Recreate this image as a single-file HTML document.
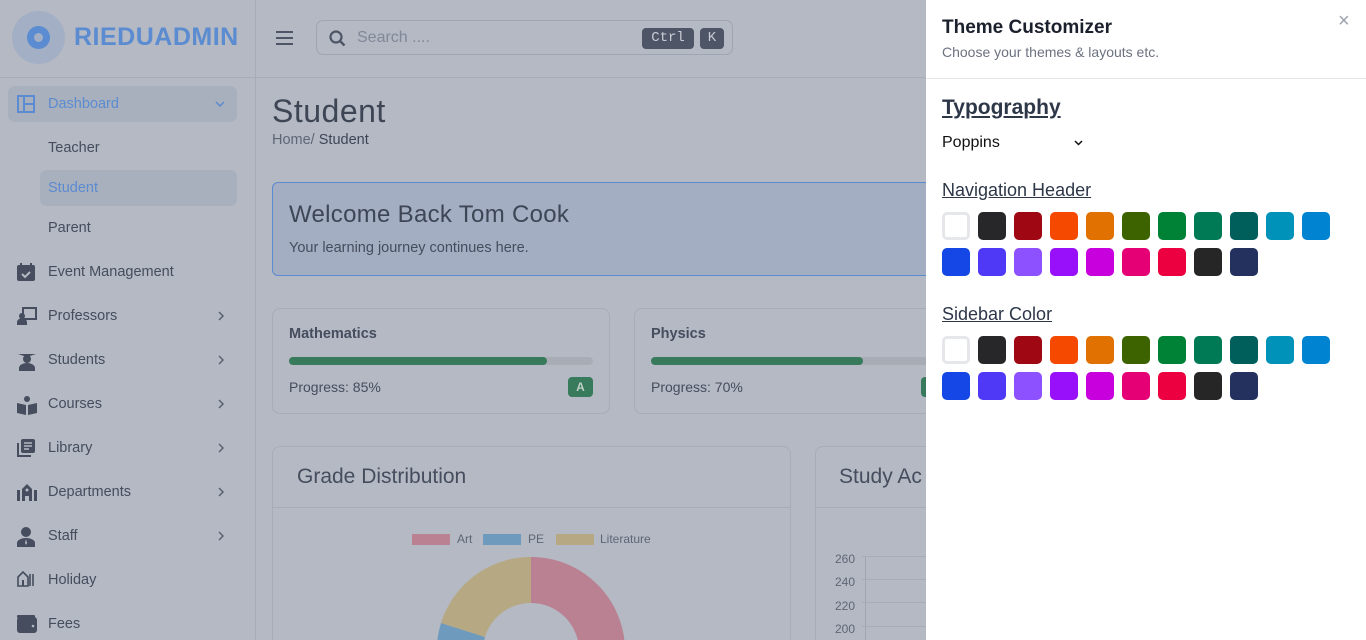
<!DOCTYPE html>
<html style="overflow:hidden"><head><meta charset="utf-8"><style>
*{box-sizing:border-box;margin:0;padding:0}
html,body{width:1366px;height:640px;overflow:hidden}
body{background:#b4b9c3;font-family:"Liberation Sans",sans-serif;color:#454d5e;position:relative}
.abs{position:absolute}
.side{left:0;top:0;width:256px;height:640px;border-right:1px solid #a7adb8}
.logo{left:12px;top:11px;width:53px;height:53px;border-radius:50%;background:#a3afc4}
.logo i{position:absolute;left:15px;top:15px;width:23px;height:23px;border-radius:50%;background:#5b8bd0}
.logo b{position:absolute;left:22px;top:22px;width:9px;height:9px;border-radius:50%;background:#a3afc4}
.brand{left:74px;top:23px;font-size:25px;font-weight:900;color:#5b8bd0;letter-spacing:0.5px}
.hline{left:0;top:77px;width:926px;height:1px;background:#a7adb8}
.nav{left:8px;width:229px;height:36px;font-size:14.5px;line-height:36px;padding-left:40px}
.nav svg{position:absolute;left:9px;top:9px}
.nav svg.chev{left:auto;right:12px;top:13px}
.search{left:316px;top:20px;width:417px;height:35px;border:1px solid #9ea6b3;border-radius:7px}
.kbd{top:7px;height:21px;background:#4d5566;color:#c8ccd4;border-radius:4px;font-family:"Liberation Mono",monospace;font-size:14px;line-height:21px;text-align:center}
.card{border:1px solid #a6acb8;border-radius:8px;overflow:hidden}
.panel{left:926px;top:0;width:440px;height:640px;background:#fff}
.sw{position:absolute;width:28px;height:28px;border-radius:5px}
.h{position:absolute;left:16px;text-decoration:underline;color:#2d3748}
</style></head><body>
<div class="abs side"></div>
<div class="abs logo"><i></i><b></b></div>
<div class="abs brand">RIEDUADMIN</div>
<div class="abs hline"></div>
<div class="abs" style="left:255px;top:0;width:1px;height:78px;background:#a7adb8"></div>
<div class="abs" style="left:276px;top:31px;width:17px;height:2px;background:#4d5566;box-shadow:0 6px 0 #4d5566,0 12px 0 #4d5566"></div>
<div class="abs search">
<svg class="abs" style="left:12px;top:9px" width="17" height="17" viewBox="0 0 17 17"><circle cx="7" cy="7" r="5.5" fill="none" stroke="#4d5566" stroke-width="2.2"/><line x1="11" y1="11" x2="15.5" y2="15.5" stroke="#4d5566" stroke-width="2.4"/></svg>
<div class="abs" style="left:40px;top:8px;font-size:16px;color:#818898">Search ....</div>
<div class="abs kbd" style="left:325px;width:52px">Ctrl</div>
<div class="abs kbd" style="left:383px;width:24px">K</div>
</div>

<div class="abs nav" style="top:86px;background:#a8b0be;border-radius:7px;color:#5b8bd0">
<svg width="18" height="18" viewBox="0 0 18 18"><rect x="1" y="1" width="16" height="16" fill="none" stroke="#5b8bd0" stroke-width="2"/><line x1="7" y1="1" x2="7" y2="17" stroke="#5b8bd0" stroke-width="2"/><line x1="7" y1="9" x2="17" y2="9" stroke="#5b8bd0" stroke-width="2"/></svg>Dashboard<svg class="chev" style="top:15px" width="10" height="7" viewBox="0 0 10 7"><path d="M1 1l4 4 4-4" fill="none" stroke="#5b8bd0" stroke-width="1.5"/></svg></div>
<div class="abs" style="left:48px;top:140px;font-size:14.5px">Teacher</div>
<div class="abs" style="left:40px;top:170px;width:197px;height:36px;background:#a8b0be;border-radius:7px"></div>
<div class="abs" style="left:48px;top:180px;font-size:14.5px;color:#5b8bd0">Student</div>
<div class="abs" style="left:48px;top:220px;font-size:14.5px">Parent</div>

<div class="abs nav" style="top:254px"><svg width="18" height="18" viewBox="0 0 18 18"><rect x="0" y="2" width="18" height="16" rx="2" fill="#454d5e"/><rect x="3" y="0" width="2" height="4" fill="#454d5e"/><rect x="13" y="0" width="2" height="4" fill="#454d5e"/><path d="M5 11l3 3 5-5" stroke="#b4b9c3" stroke-width="2" fill="none"/></svg>Event Management</div>
<div class="abs nav" style="top:298px"><svg width="20" height="18" viewBox="0 0 20 18"><rect x="6" y="1" width="13" height="11" fill="none" stroke="#454d5e" stroke-width="2"/><circle cx="5" cy="9" r="3" fill="#454d5e"/><path d="M0 18v-3a4 3 0 0 1 10 0v3z" fill="#454d5e"/></svg>Professors<svg class="chev" width="7" height="10" viewBox="0 0 7 10"><path d="M1 1l4 4-4 4" fill="none" stroke="#5a6170" stroke-width="1.5"/></svg></div>
<div class="abs nav" style="top:342px"><svg width="20" height="20" viewBox="0 0 20 20"><path d="M1 3h18l-9 3z" fill="#454d5e"/><circle cx="10" cy="8" r="4" fill="#454d5e"/><path d="M2 20v-3a8 5 0 0 1 16 0v3z" fill="#454d5e"/></svg>Students<svg class="chev" width="7" height="10" viewBox="0 0 7 10"><path d="M1 1l4 4-4 4" fill="none" stroke="#5a6170" stroke-width="1.5"/></svg></div>
<div class="abs nav" style="top:386px"><svg width="20" height="20" viewBox="0 0 20 20"><circle cx="10" cy="4" r="3" fill="#454d5e"/><path d="M0 8l9 2v10L0 18zM20 8l-9 2v10l9-2z" fill="#454d5e"/></svg>Courses<svg class="chev" width="7" height="10" viewBox="0 0 7 10"><path d="M1 1l4 4-4 4" fill="none" stroke="#5a6170" stroke-width="1.5"/></svg></div>
<div class="abs nav" style="top:430px"><svg width="18" height="18" viewBox="0 0 18 18"><rect x="4" y="0" width="14" height="14" rx="2" fill="#454d5e"/><path d="M1 4v13h13" stroke="#454d5e" stroke-width="2" fill="none"/><path d="M7 4h8M7 7h8M7 10h5" stroke="#b4b9c3" stroke-width="1.5"/></svg>Library<svg class="chev" width="7" height="10" viewBox="0 0 7 10"><path d="M1 1l4 4-4 4" fill="none" stroke="#5a6170" stroke-width="1.5"/></svg></div>
<div class="abs nav" style="top:474px"><svg width="20" height="18" viewBox="0 0 20 18"><rect x="0" y="7" width="3" height="11" fill="#454d5e"/><rect x="17" y="7" width="3" height="11" fill="#454d5e"/><path d="M5 18V6l5-5 5 5v12h-3v-5h-4v5z" fill="#454d5e"/><circle cx="10" cy="7" r="1.5" fill="#b4b9c3"/></svg>Departments<svg class="chev" width="7" height="10" viewBox="0 0 7 10"><path d="M1 1l4 4-4 4" fill="none" stroke="#5a6170" stroke-width="1.5"/></svg></div>
<div class="abs nav" style="top:518px"><svg width="18" height="20" viewBox="0 0 18 20"><circle cx="9" cy="5" r="5" fill="#454d5e"/><path d="M0 20v-4a9 5 0 0 1 18 0v4z" fill="#454d5e"/><path d="M9 12l-1 4 1 2 1-2z" fill="#b4b9c3"/></svg>Staff<svg class="chev" width="7" height="10" viewBox="0 0 7 10"><path d="M1 1l4 4-4 4" fill="none" stroke="#5a6170" stroke-width="1.5"/></svg></div>
<div class="abs nav" style="top:562px"><svg width="18" height="16" viewBox="0 0 18 16"><path d="M1 15V6l5-5 5 5v9z" fill="none" stroke="#454d5e" stroke-width="1.6"/><path d="M13 3v12M16 3v12" stroke="#454d5e" stroke-width="1.6"/><rect x="5" y="9" width="2" height="6" fill="#454d5e"/></svg>Holiday</div>
<div class="abs nav" style="top:606px"><svg width="20" height="18" viewBox="0 0 20 18"><rect x="0" y="2" width="20" height="16" rx="3" fill="#454d5e"/><rect x="0" y="0" width="18" height="3" rx="1" fill="#454d5e"/><circle cx="16" cy="11" r="1.3" fill="#b4b9c3"/></svg>Fees</div>

<div class="abs" style="left:272px;top:93px;font-size:32px;color:#3e4656;letter-spacing:0.5px">Student</div>
<div class="abs" style="left:272px;top:132px;font-size:14.5px;color:#5f6676">Home/ <span style="color:#3e4656">Student</span></div>
<div class="abs" style="left:272px;top:182px;width:680px;height:94px;background:#a3aec2;border:1px solid #5b8bd0;border-radius:6px"></div>
<div class="abs" style="left:289px;top:201px;font-size:24px;color:#3e4656;letter-spacing:0.3px">Welcome Back Tom Cook</div>
<div class="abs" style="left:289px;top:240px;font-size:14.5px;color:#454d5e">Your learning journey continues here.</div>

<div class="abs card" style="left:272px;top:308px;width:338px;height:106px"></div>
<div class="abs" style="left:289px;top:326px;font-size:14.5px;font-weight:bold;color:#454d5e">Mathematics</div>
<div class="abs" style="left:289px;top:357px;width:304px;height:8px;border-radius:4px;background:#a7acb5"></div>
<div class="abs" style="left:289px;top:357px;width:258px;height:8px;border-radius:4px;background:#377a5c"></div>
<div class="abs" style="left:289px;top:379px;font-size:14px">Progress: 85%</div>
<div class="abs" style="left:568px;top:377px;width:25px;height:20px;border-radius:4px;background:#377a5c;color:#c0d0c8;font-size:12px;font-weight:bold;text-align:center;line-height:20px">A</div>

<div class="abs card" style="left:634px;top:308px;width:320px;height:106px"></div>
<div class="abs" style="left:651px;top:326px;font-size:14.5px;font-weight:bold;color:#454d5e">Physics</div>
<div class="abs" style="left:651px;top:357px;width:290px;height:8px;border-radius:4px;background:#a7acb5"></div>
<div class="abs" style="left:651px;top:357px;width:212px;height:8px;border-radius:4px;background:#377a5c"></div>
<div class="abs" style="left:651px;top:379px;font-size:14px">Progress: 70%</div>
<div class="abs" style="left:921px;top:377px;width:10px;height:20px;border-radius:4px;background:#377a5c"></div>

<div class="abs card" style="left:272px;top:446px;width:519px;height:220px"></div>
<div class="abs" style="left:273px;top:507px;width:517px;height:1px;background:#a6acb8"></div>
<div class="abs" style="left:297px;top:465px;font-size:21px;color:#454d5e">Grade Distribution</div>
<div class="abs" style="left:412px;top:534px;width:38px;height:11px;background:#b98192"></div>
<div class="abs" style="left:457px;top:532px;font-size:12px;color:#5f6676">Art</div>
<div class="abs" style="left:483px;top:534px;width:38px;height:11px;background:#6e9abd"></div>
<div class="abs" style="left:528px;top:532px;font-size:12px;color:#5f6676">PE</div>
<div class="abs" style="left:556px;top:534px;width:38px;height:11px;background:#b5a883"></div>
<div class="abs" style="left:600px;top:532px;font-size:12px;color:#5f6676">Literature</div>
<svg class="abs" style="left:431px;top:551px" width="200" height="89" viewBox="0 0 200 89">
<g transform="translate(100,100)">
<path d="M0-94A94 94 0 0 1 94 0L48 0A48 48 0 0 0 0-48z" fill="#b98192"/>
<path d="M-90-28A94 94 0 0 0 -94 5L-48 3A48 48 0 0 1 -46-14z" fill="#6e9abd"/>
<path d="M0-94A94 94 0 0 0 -90-28L-46-14A48 48 0 0 1 0-48z" fill="#b5a883"/>
</g></svg>

<div class="abs card" style="left:815px;top:446px;width:200px;height:220px"></div>
<div class="abs" style="left:816px;top:507px;width:120px;height:1px;background:#a6acb8"></div>
<div class="abs" style="left:839px;top:465px;font-size:21px;color:#454d5e">Study Ac</div>
<div class="abs" style="left:835px;top:548px;font-size:12px;line-height:23.3px;color:#5f6676">260<br>240<br>220<br>200</div>
<div class="abs" style="left:865px;top:556px;width:1px;height:90px;background:#9ea4b0"></div>
<div class="abs" style="left:862px;top:556px;width:70px;height:1px;background:#a7adb8;box-shadow:0 23px 0 #a7adb8,0 46px 0 #a7adb8,0 70px 0 #a7adb8"></div>

<div class="abs panel">
<div class="abs" style="left:16px;top:17px;font-size:19px;font-weight:bold;color:#1a202c">Theme Customizer</div>
<div class="abs" style="left:16px;top:44px;font-size:14px;color:#6b7280">Choose your themes &amp; layouts etc.</div>
<div class="abs" style="left:412px;top:11px;font-size:20px;color:#9ca3af;line-height:20px">×</div>
<div class="abs" style="left:0;top:78px;width:440px;height:1px;background:#e5e7eb"></div>
<div class="h" style="top:96px;font-size:21px;font-weight:bold">Typography</div>
<div class="abs" style="left:16px;top:134px;font-size:16px;color:#111">Poppins</div>
<svg class="abs" style="left:148px;top:140px" width="9" height="6" viewBox="0 0 9 6"><path d="M1 1l3.5 3.5L8 1" fill="none" stroke="#111" stroke-width="1.5"/></svg>
<div class="h" style="top:180px;font-size:18px">Navigation Header</div>
<div class="h" style="top:304px;font-size:18px">Sidebar Color</div>
<div id="sw"></div>
</div>
<script>
var c=["#fff","#27272a","#9f0712","#f54900","#e17100","#3d6300","#008236","#007a55","#005f5a","#0092b8","#0084d1","#1447e6","#4f39f6","#8e51ff","#9810fa","#c800de","#e60076","#ec003f","#262626","#24305e"];
var h="";[212,336].forEach(function(y0){c.forEach(function(col,i){var r=i<11?0:1,k=i<11?i:i-11;h+='<div class="sw" style="left:'+(16+k*36)+'px;top:'+(y0+r*36)+'px;background:'+col+(i==0?';border:3px solid #e5e7eb':'')+'"></div>';});});
document.getElementById("sw").outerHTML=h;
</script>
</body></html>
